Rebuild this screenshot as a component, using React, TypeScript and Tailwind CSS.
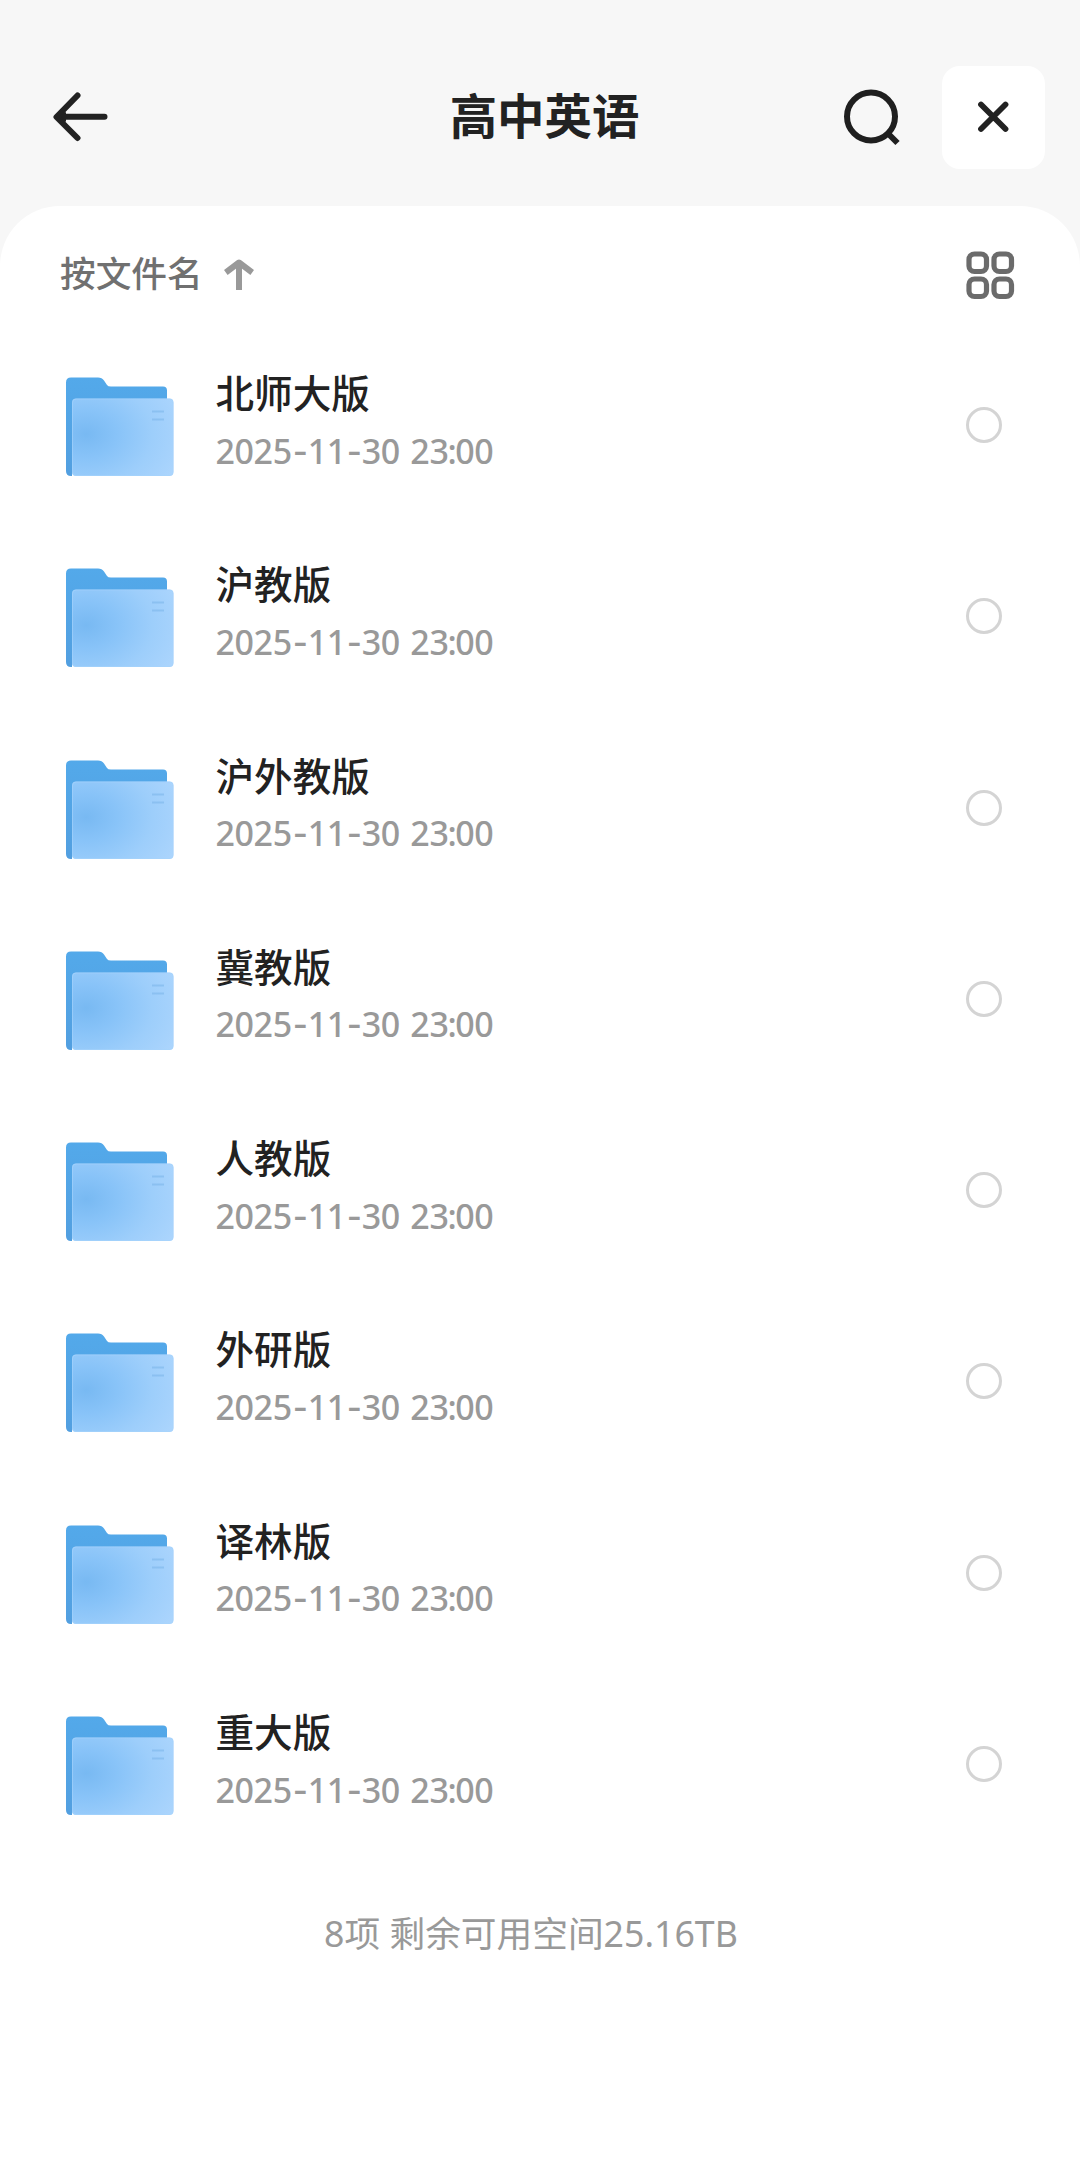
const folders = ["北师大版", "沪教版", "沪外教版", "冀教版", "人教版", "外研版", "译林版", "重大版"];

function BackIcon() {
  return (
    <svg width="56" height="50" viewBox="0 0 56 50" fill="none" stroke="#222" strokeWidth="6" strokeLinecap="round" strokeLinejoin="round">
      <path d="M51.500 24.800H5M24.500 3.500L3.500 25L24.500 46" />
      <path d="M12 21L7 25L12 29Z" fill="#222" strokeWidth="2" />
    </svg>
  );
}

function SearchIcon() {
  return (
    <svg width="58" height="58" viewBox="0 0 58 58" fill="none" stroke="#1f1f1f" strokeWidth="6">
      <circle cx="28" cy="28.500" r="24" />
      <path d="M44.500 45L54.500 55" />
    </svg>
  );
}

function CloseIcon() {
  return (
    <svg width="32" height="32" viewBox="0 0 32 32" fill="none" stroke="#222" strokeWidth="5.800" strokeLinecap="round">
      <path d="M3 3.500L27.500 28M27.500 3.500L3 28" />
    </svg>
  );
}

function SortIcon() {
  return (
    <svg width="30" height="32" viewBox="0 0 30 32" fill="none" stroke="#999" strokeWidth="6" strokeLinejoin="round">
      <path d="M15 31V4M1.800 13.500L15 3.500L28.200 13.500" />
    </svg>
  );
}

function GridIcon() {
  return (
    <svg width="49" height="49" viewBox="0 0 49 49" fill="none" stroke="#6b6b6b" strokeWidth="5.200">
      <rect x="3" y="3" width="17.500" height="17.500" rx="5.500" />
      <rect x="28" y="3" width="17.500" height="17.500" rx="5.500" />
      <rect x="3" y="28" width="17.500" height="17.500" rx="5.500" />
      <rect x="28" y="28" width="17.500" height="17.500" rx="5.500" />
    </svg>
  );
}

function FolderIcon() {
  return (
    <svg width="108" height="100" viewBox="0 0 108 100">
      <defs>
        <linearGradient id="back" x1="0" y1="0" x2="0" y2="1">
          <stop offset="0" stopColor="#53a9ea" />
          <stop offset="1" stopColor="#529fe0" />
        </linearGradient>
        <radialGradient id="front" cx="0.140" cy="0.460" r="1">
          <stop offset="0" stopColor="#78b9f2" />
          <stop offset="0.300" stopColor="#88c3f8" />
          <stop offset="0.650" stopColor="#9dcefb" />
          <stop offset="1" stopColor="#acd5fd" />
        </radialGradient>
      </defs>
      <path fill="url(#back)" d="M5 .500H32Q36 .500 38 3.500L41 8Q42 9.500 45 9.500H97Q101 9.500 101 13.500V94H6V99H5Q0 99 0 94V5.500Q0 .500 5 .500Z" />
      <rect x="6" y="21.500" width="101.500" height="77.500" rx="4" fill="url(#front)" />
      <rect x="6.500" y="22" width="100.500" height="76.500" rx="3.500" fill="none" stroke="#a6d3fb" strokeOpacity=".6" />
      <path d="M86 34.500H98M86 42.500H98" stroke="#83bbed" strokeWidth="2" opacity=".7" />
    </svg>
  );
}

function Hyphen() {
  return <span className="inline-block w-[16px] scale-x-125 -translate-y-[1px] text-center">-</span>;
}

function FolderRow({ name }: { name: string }) {
  return (
    <li className="flex h-[191.300px] items-start">
      <div className="mt-[25px] shrink-0"><FolderIcon /></div>
      <div className="ml-[41.500px] flex flex-1 flex-col">
        <span className="mt-[13px] h-[56px] text-[38.600px] leading-[56px] font-medium text-[#222]">{name}</span>
        <span className="mt-[6.500px] text-[34px] leading-[46px] font-medium tracking-[-0.400px] [word-spacing:2px] whitespace-pre text-[#999]">
          2025<Hyphen />11<Hyphen />30 23<span className="-mx-[1px]">:</span>00
        </span>
      </div>
      <span className="mt-[55px] h-9 w-9 rounded-full border-[3.500px] border-[#d4d4d4]" />
    </li>
  );
}

export default function App() {
  return (
    <main className="flex h-[2164px] w-[1080px] flex-col overflow-hidden bg-[#f7f7f7] font-['Noto_Sans','Noto_Sans_CJK_SC',sans-serif]">
      <header className="grid h-[206px] shrink-0 grid-cols-[1fr_auto_1fr] items-center pt-[28px] pr-[35px] pl-[53px]">
        <button aria-label="返回" className="justify-self-start"><BackIcon /></button>
        <h1 className="mr-[9px] mb-[3px] text-[47.400px] leading-[64px] font-bold text-[#222]">高中英语</h1>
        <div className="flex items-center justify-self-end">
          <button aria-label="搜索" className="mr-[41px]"><SearchIcon /></button>
          <button aria-label="关闭" className="flex h-[103px] w-[103px] items-center justify-center rounded-[18px] bg-white"><CloseIcon /></button>
        </div>
      </header>
      <section className="flex flex-1 flex-col rounded-t-[60px] bg-white">
        <div className="flex h-[146px] items-center pr-[65px] pl-[60px]">
          <span className="mb-[12px] text-[35.700px] leading-[50px] font-medium text-[#707070]">按文件名</span>
          <span className="mb-[8px] ml-[21px]"><SortIcon /></span>
          <span className="mb-[8px] ml-auto"><GridIcon /></span>
        </div>
        <ul className="pr-[78px] pl-[66px]">
          {folders.map((name) => <FolderRow key={name} name={name} />)}
        </ul>
        <p className="mt-[26px] pr-[18px] text-center text-[35.700px] leading-[50px] text-[#999]">8项 剩余可用空间25.16TB</p>
      </section>
    </main>
  );
}
